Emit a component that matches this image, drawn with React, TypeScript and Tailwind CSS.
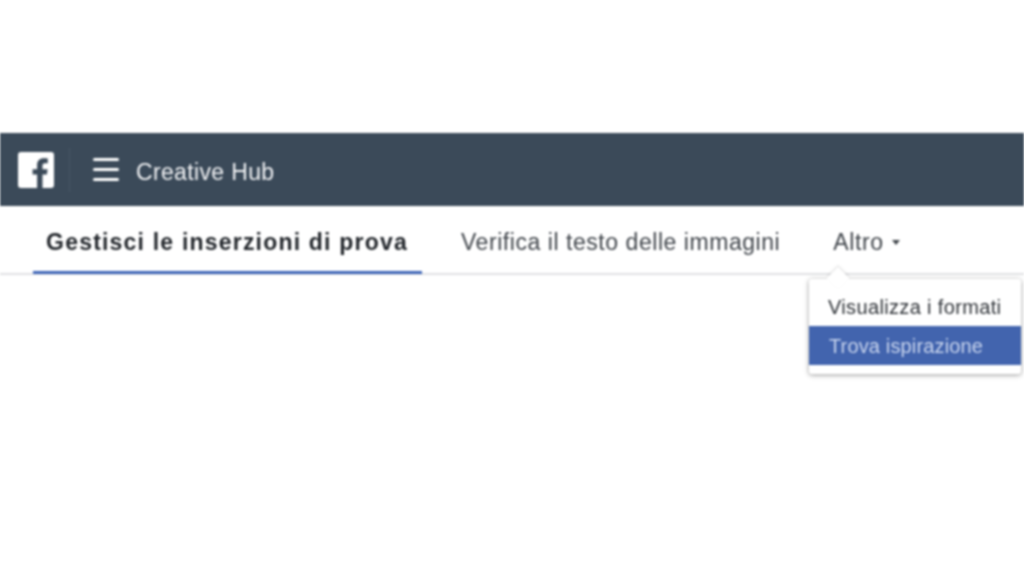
export default function App() {
  return (
    <div className="w-[1024px] h-[576px] bg-white overflow-hidden relative font-['Liberation_Sans',Arial,sans-serif] blur-[0.8px]">
      <div className="h-[133px]" />
      <header className="h-[73px] bg-[#3b4a59] flex items-center text-white">
        <div className="ml-[18px] w-[36px] h-[36px] bg-white rounded-[3px] relative overflow-hidden shrink-0">
          <svg viewBox="0 0 36 36" className="w-[36px] h-[36px]">
            <path fill="#3b4a59" d="M24.5 36V22.5h4.4l.7-5.2h-5.1v-3.4c0-1.5.4-2.6 2.6-2.6h2.7V6.4c-.5-.1-2.1-.2-4-.2-4 0-6.7 2.4-6.7 6.9v4.2h-4.5v5.2h4.5V36z" />
          </svg>
        </div>
        <div className="ml-[15px] w-px h-[44px] bg-[#465566]" />
        <div className="ml-[23px] w-[26px] flex flex-col gap-[7px]">
          <div className="h-[3px] bg-white rounded-sm" />
          <div className="h-[3px] bg-white rounded-sm" />
          <div className="h-[3px] bg-white rounded-sm" />
        </div>
        <span className="ml-[17px] text-[23px] tracking-[0.35px] leading-none text-[#f2f3f5] mt-[5px]">Creative Hub</span>
      </header>
      <nav className="h-[69px] border-b-2 border-[#e0e1e3] flex items-stretch relative">
        <div className="ml-[33px] w-[389px] h-[68px] border-b-[3px] border-[#3f66b8] flex items-center justify-center">
          <span className="text-[23px] font-bold tracking-[1.2px] text-[#23272c] mr-[1px] mt-[7px] whitespace-nowrap">Gestisci le inserzioni di prova</span>
        </div>
        <div className="ml-[39px] flex items-center h-[66px]">
          <span className="text-[23px] text-[#40454b] whitespace-nowrap tracking-[0.55px] mt-[6px]">Verifica il testo delle immagini</span>
        </div>
        <div className="ml-[53px] flex items-center h-[66px]">
          <span className="text-[23px] tracking-[0.6px] text-[#40454b] mt-[6px]">Altro</span>
          <span className="ml-[8px] w-0 h-0 border-x-[4px] border-x-transparent border-t-[5px] border-t-[#40454b] mt-[7px]" />
        </div>
      </nav>
      <div className="absolute left-[809px] top-[279px] w-[212px] h-[95px] bg-white rounded-[3px] shadow-[0_1px_5px_rgba(0,0,0,0.4)]">
        <div className="absolute left-[21px] top-[-9px] w-[16px] h-[16px] bg-white rotate-45 shadow-[-1px_-1px_2px_rgba(0,0,0,0.12)]" />
        <div className="relative pt-[8px]">
          <div className="h-[39px] pl-[19px] flex items-center text-[20px] tracking-[0.35px] text-[#2f3338] whitespace-nowrap">Visualizza i formati</div>
          <div className="h-[39px] pl-[20px] flex items-center text-[20px] tracking-[0.15px] text-[#c9d5ee] bg-[#4264ae] whitespace-nowrap">Trova ispirazione</div>
        </div>
      </div>
    </div>
  );
}
